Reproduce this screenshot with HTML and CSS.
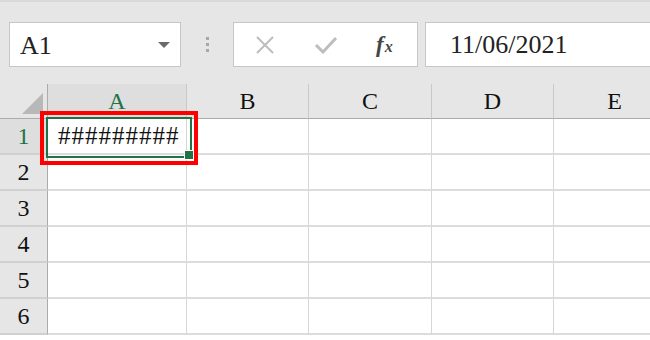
FILE: index.html
```html
<!DOCTYPE html>
<html>
<head lang="en">
    <meta charset="UTF-8">
    <title>Excel A1</title>
    <link rel="stylesheet" href="styles.css">
</head>
<body>
    <div class="toolbar">
        <div class="namebox">
            <span class="name">A1</span>
            <span class="arrow"></span>
        </div>
        <div class="grip"><i></i><i></i><i></i></div>
        <div class="buttons">
            <svg class="ico-x" width="20" height="18" viewBox="0 0 20 18">
                <path d="M2 1 L18 17 M18 1 L2 17" stroke="#bdbdbd" stroke-width="2" fill="none"/>
            </svg>
            <svg class="ico-ok" width="24" height="18" viewBox="0 0 24 18">
                <path d="M2 9 L9 16 L22 2" stroke="#bdbdbd" stroke-width="3" fill="none"/>
            </svg>
            <span class="fx"><i>f</i><b>x</b></span>
        </div>
        <div class="formula">11/06/2021</div>
    </div>
    <div class="sheet">
        <div class="grid">
            <div class="corner"><span class="tri"></span></div>
            <div class="colhead sel">A</div>
            <div class="colhead">B</div>
            <div class="colhead">C</div>
            <div class="colhead">D</div>
            <div class="colhead">E</div>

            <div class="rowhead sel">1</div>
            <div class="cell"><span class="hash">#########</span></div>
            <div class="cell"></div><div class="cell"></div><div class="cell"></div><div class="cell"></div>

            <div class="rowhead">2</div>
            <div class="cell"></div><div class="cell"></div><div class="cell"></div><div class="cell"></div><div class="cell"></div>

            <div class="rowhead">3</div>
            <div class="cell"></div><div class="cell"></div><div class="cell"></div><div class="cell"></div><div class="cell"></div>

            <div class="rowhead">4</div>
            <div class="cell"></div><div class="cell"></div><div class="cell"></div><div class="cell"></div><div class="cell"></div>

            <div class="rowhead">5</div>
            <div class="cell"></div><div class="cell"></div><div class="cell"></div><div class="cell"></div><div class="cell"></div>

            <div class="rowhead">6</div>
            <div class="cell"></div><div class="cell"></div><div class="cell"></div><div class="cell"></div><div class="cell"></div>
        </div>
        <!-- selection overlays -->
        <div class="active"><span class="handle"></span></div>
        <div class="redbox"></div>
    </div>
</body>
</html>
```

FILE: styles.css
```css
*{
    padding: 0;
    margin: 0;
    box-sizing: border-box;
}
body{
    width: 650px;
    height: 340px;
    overflow: hidden;
    background: #ffffff;
    font-family: "Liberation Serif", "Times New Roman", serif;
    color: #222222;
}
.toolbar{
    height: 84px;
    background: #e6e6e6;
    border-top: 2px solid #d9d9d9;
    padding-top: 20px;
    display: flex;
    align-items: flex-start;
    overflow: hidden;
}
.namebox{
    margin-left: 9px;
    width: 172px;
    height: 45px;
    background: #ffffff;
    border: 1px solid #c6c6c6;
    display: flex;
    align-items: center;
    padding-left: 10px;
    padding-right: 10px;
}
.name{
    flex: 1;
    font-size: 26px;
    line-height: 26px;
    padding-top: 2px;
}
.arrow{
    width: 0;
    height: 0;
    border-left: 6px solid transparent;
    border-right: 6px solid transparent;
    border-top: 6px solid #6b6b6b;
}
.grip{
    width: 52px;
    height: 45px;
    display: flex;
    flex-direction: column;
    align-items: center;
    justify-content: center;
    gap: 3px;
}
.grip i{
    width: 3px;
    height: 3px;
    background: #a8a8a8;
}
.buttons{
    width: 185px;
    height: 45px;
    background: #ffffff;
    border: 1px solid #c6c6c6;
    display: flex;
    align-items: center;
}
.ico-x{
    margin-left: 21px;
}
.ico-ok{
    margin-left: 39px;
}
.fx{
    margin-left: 38px;
    color: #454545;
    font-style: italic;
    font-weight: bold;
    line-height: 20px;
    padding-top: 2px;
}
.fx i{
    font-size: 23px;
}
.fx b{
    font-size: 16px;
    margin-left: 1px;
}
.formula{
    flex: 1;
    margin-left: 7px;
    margin-right: -10px;
    height: 45px;
    background: #ffffff;
    border: 1px solid #c6c6c6;
    padding-left: 24px;
    font-size: 26px;
    line-height: 44px;
}
.sheet{
    position: relative;
    overflow: hidden;
    height: 256px;
}
.grid{
    display: grid;
    grid-template-columns: 48px 139px 122px 123px 122px 122px;
    grid-template-rows: 35px repeat(6, 36px);
    width: 676px;
}
.corner{
    background: #e6e6e6;
    border-right: 1px solid #ababab;
    border-bottom: 1px solid #ababab;
    position: relative;
}
.tri{
    position: absolute;
    right: 4px;
    bottom: 4px;
    width: 0;
    height: 0;
    border-left: 21px solid transparent;
    border-bottom: 21px solid #b8b8b8;
}
.colhead{
    background: #e6e6e6;
    border-right: 1px solid #c9c9c9;
    border-bottom: 1px solid #ababab;
    text-align: center;
    font-size: 24px;
    line-height: 34px;
    color: #111111;
}
.rowhead{
    background: #e6e6e6;
    border-right: 1px solid #ababab;
    border-bottom: 2px solid #d0d0d0;
    text-align: center;
    font-size: 24px;
    line-height: 35px;
    color: #111111;
}
.colhead.sel, .rowhead.sel{
    background: #dedede;
    color: #217346;
}
.cell{
    border-right: 1px solid #d6d6d6;
    border-bottom: 2px solid #dcdcdc;
    font-size: 25px;
    line-height: 34px;
    padding-left: 10px;
}
.hash{
    letter-spacing: 1px;
    color: #111111;
}
.active{
    position: absolute;
    left: 46px;
    top: 33px;
    width: 146px;
    height: 41px;
    border: 2px solid #217346;
}
.handle{
    position: absolute;
    right: -4px;
    bottom: -4px;
    width: 10px;
    height: 10px;
    background: #217346;
    border: 1px solid #ffffff;
}
.redbox{
    position: absolute;
    left: 40px;
    top: 27px;
    width: 158px;
    height: 54px;
    border: 4px solid #ff0000;
}
```
